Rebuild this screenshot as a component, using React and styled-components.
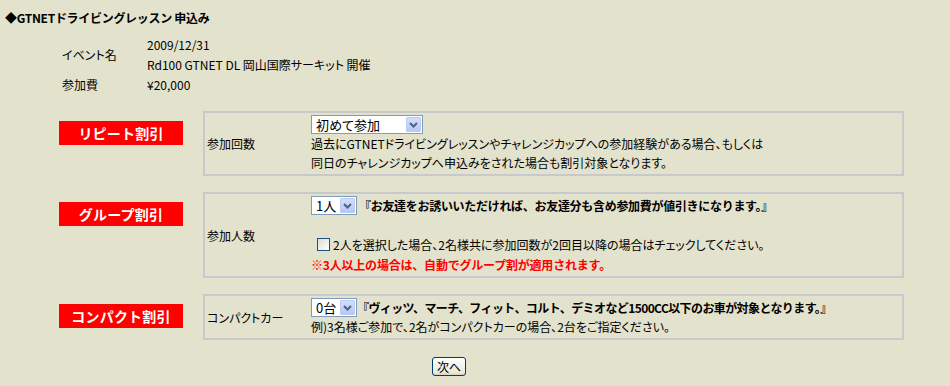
import React from 'react';
import styled, { createGlobalStyle } from 'styled-components';

const Global = createGlobalStyle`
  body {
    margin: 0;
    background: #e3e2cc;
    color: #000;
    font-family: "Noto Sans CJK JP", "Liberation Sans", sans-serif;
    font-size: 12px;
  }
`

const Page = styled.div`
  display: flex;
  flex-direction: column;
  width: 950px;
  padding-top: 10px;
`

const Title = styled.div`
  margin-left: 5px;
  font-weight: bold;
  line-height: 16px;
  letter-spacing: -0.3px;
`

const Info = styled.div`
  display: grid;
  grid-template-columns: 85px auto;
  grid-auto-rows: 20px;
  margin: 9px 0 0 62px;
  line-height: 20px;
  font-feature-settings: "palt";
`

const InfoLabel = styled.div`
  grid-row: span ${(p) => p.$span || 1};
  align-self: center;
`

const Sections = styled.div`
  display: flex;
  flex-direction: column;
  gap: 16px;
  margin: 16px 0 0 59px;
`

const Row = styled.div`
  display: grid;
  grid-template-columns: 124px 701px;
  gap: 20px;
  align-items: start;
`

const Badge = styled.div`
  margin-top: 10px;
  height: 24px;
  background: #ff0000;
  color: #fff;
  font-weight: bold;
  font-size: 14px;
  line-height: 24px;
  text-align: center;
  letter-spacing: 0.2px;
`

const Box = styled.div`
  display: grid;
  grid-template-columns: 106px 1fr;
  border: 2px solid #c8c9cc;
  padding: 2px 0;
`

const BoxLabel = styled.div`
  align-self: center;
  padding-left: 2px;
  font-feature-settings: "palt";
`

const Content = styled.div`
  display: flex;
  flex-direction: column;
`

const Line = styled.div`
  display: flex;
  align-items: center;
  height: ${(p) => p.$h || 19}px;
  line-height: 19px;
  white-space: nowrap;
  font-weight: ${(p) => (p.$bold ? 'bold' : 'normal')};
  color: ${(p) => p.$color || '#000'};
  font-feature-settings: ${(p) => (p.$bold ? 'normal' : '"palt"')};
  letter-spacing: ${(p) => p.$ls || 0}px;
`

const SelectWrap = styled.div`
  position: relative;
  display: inline-flex;
  align-items: center;
  width: ${(p) => p.$w}px;
  height: 19px;
  box-sizing: border-box;
  border: 1px solid #7f9db9;
  background: #fff;
  margin-right: ${(p) => p.$mr || 0}px;
  flex-shrink: 0;
  letter-spacing: 0;
`

const SelectText = styled.span`
  padding-left: 4px;
  font-size: 13px;
  font-weight: normal;
  line-height: 17px;
`

const Arrow = styled.span`
  position: absolute;
  top: 1px;
  right: 1px;
  bottom: 1px;
  width: 15px;
  display: flex;
  align-items: center;
  justify-content: center;
  background: linear-gradient(#d3defb, #b6c9f5);
  border: 1px solid #b9cbf3;
  box-sizing: border-box;
  border-radius: 1px;
`

const Check = styled.span`
  display: inline-block;
  width: 13px;
  height: 13px;
  box-sizing: border-box;
  border: 1px solid #1c5180;
  background: linear-gradient(135deg, #dcdcd7, #fff);
  margin: 0 3px 0 6px;
`

const Footer = styled.div`
  display: flex;
  margin: 17px 0 0 432px;
`

const NextButton = styled.button`
  width: 34px;
  height: 19px;
  padding: 0;
  border: 1px solid #003c74;
  border-radius: 3px;
  background: linear-gradient(#fff, #ece9d8 85%, #d6d0c5);
  font-family: inherit;
  font-size: 12px;
  line-height: 16px;
  color: #000;
`

function Select({ width, value, mr }) {
  return (
    <SelectWrap $w={width} $mr={mr}>
      <SelectText>{value}</SelectText>
      <Arrow>
        <svg width="9" height="6" viewBox="0 0 9 6">
          <path d="M1 1 L4.5 4.5 L8 1" fill="none" stroke="#4d6185" strokeWidth="2" />
        </svg>
      </Arrow>
    </SelectWrap>
  )
}

export default function App() {
  return (
    <Page>
      <Global />
      <Title>◆GTNETドライビングレッスン 申込み</Title>
      <Info>
        <InfoLabel $span={2}>イベント名</InfoLabel>
        <div>2009/12/31</div>
        <div>Rd100 GTNET DL 岡山国際サーキット 開催</div>
        <InfoLabel>参加費</InfoLabel>
        <div>¥20,000</div>
      </Info>
      <Sections>
        <Row>
          <Badge>リピート割引</Badge>
          <Box>
            <BoxLabel>参加回数</BoxLabel>
            <Content>
              <Line><Select width={112} value="初めて参加" /></Line>
              <Line>過去にGTNETドライビングレッスンやチャレンジカップへの参加経験がある場合、もしくは</Line>
              <Line>同日のチャレンジカップへ申込みをされた場合も割引対象となります。</Line>
            </Content>
          </Box>
        </Row>
        <Row>
          <Badge>グループ割引</Badge>
          <Box>
            <BoxLabel>参加人数</BoxLabel>
            <Content>
              <Line $bold $ls={-0.3}>
                <Select width={46} value="1人" mr={2} />
                『お友達をお誘いいただければ、お友達分も含め参加費が値引きになります。』
              </Line>
              <Line $h={18} />
              <Line $h={22}>
                <Check />
                2人を選択した場合、2名様共に参加回数が2回目以降の場合はチェックしてください。
              </Line>
              <Line $bold $color="#ff0000" $ls={-0.2}>※3人以上の場合は、自動でグループ割が適用されます。</Line>
            </Content>
          </Box>
        </Row>
        <Row>
          <Badge>コンパクト割引</Badge>
          <Box>
            <BoxLabel>コンパクトカー</BoxLabel>
            <Content>
              <Line $bold $ls={-0.6}>
                <Select width={46} value="0台" />
                『ヴィッツ、マーチ、フィット、コルト、デミオなど1500CC以下のお車が対象となります。』
              </Line>
              <Line>例)3名様ご参加で、2名がコンパクトカーの場合、2台をご指定ください。</Line>
            </Content>
          </Box>
        </Row>
      </Sections>
      <Footer>
        <NextButton>次へ</NextButton>
      </Footer>
    </Page>
  )
}
